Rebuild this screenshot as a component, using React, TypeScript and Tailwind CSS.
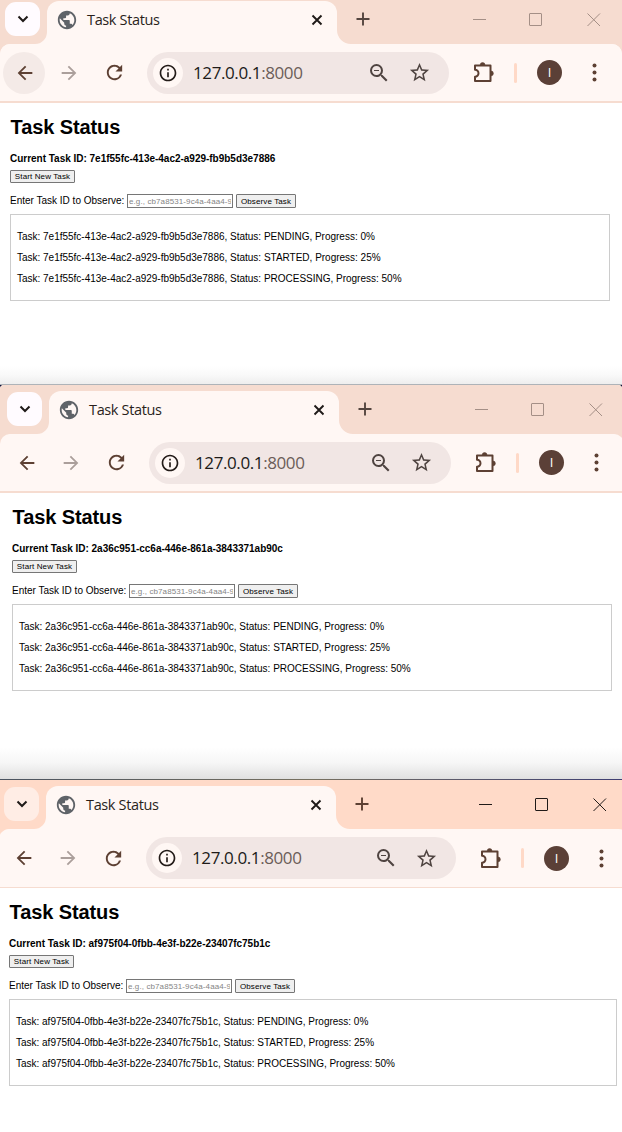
import React from "react";
import { MdArrowBack, MdArrowForward, MdInfoOutline, MdPublic, MdRefresh, MdStarOutline, MdZoomOut } from "react-icons/md";

type BrowserProps = {
  taskId: string;
  frame: string;
  inner: string;
  strip: string;
  stripColor: string;
  menuButton: string;
  controls: string;
  plus: string;
  toolbar: string;
  divider: string;
  backButton: string;
};

const STEPS = [
  { status: "PENDING", progress: 0 },
  { status: "STARTED", progress: 25 },
  { status: "PROCESSING", progress: 50 },
];

function TabStrip({ p }: { p: BrowserProps }) {
  return (
    <div className={`flex items-end ${p.strip} ${p.stripColor}`}>
      <div className={`mb-2 ml-[5px] flex h-[34px] w-[35px] items-center justify-center rounded-[11px] ${p.menuButton}`}>
        <svg width="12" height="8" viewBox="0 0 12 8" fill="none" stroke="#1f1a18" strokeWidth="2">
          <path d="M1.500 1.500 6 6l4.500-4.500" />
        </svg>
      </div>
      <div className="relative ml-[7px] flex h-[43px] w-[290px] items-center rounded-t-[12px] bg-[#fff7f4] pb-[6px] pl-[9px] pr-[14px]">
        <svg className="absolute bottom-0 -left-3" width="12" height="12" viewBox="0 0 12 12">
          <path d="M12 0A12 12 0 0 1 0 12H12Z" fill="#fff7f4" />
        </svg>
        <svg className="absolute bottom-0 -right-[14px]" width="14" height="14" viewBox="0 0 14 14">
          <path d="M0 0A14 14 0 0 0 14 14H0Z" fill="#fff7f4" />
        </svg>
        <MdPublic className="size-[22px] text-[#5f6368]" />
        <span className="ml-[9px] whitespace-nowrap font-['Open_Sans',sans-serif] text-[14.500px] leading-5 tracking-[-0.360px] text-[#2a1f1b]">Task Status</span>
        <svg className="ml-auto" width="12" height="12" viewBox="0 0 12 12" stroke="#1f1a18" strokeWidth="1.900">
          <path d="M1.500 1.500l9 9M10.500 1.500l-9 9" />
        </svg>
      </div>
      <svg className={`mb-[18px] ml-[19px] ${p.plus}`} width="14" height="14" viewBox="0 0 14 14" stroke="currentColor" strokeWidth="1.900">
        <path d="M7 .5v13M.5 7h13" />
      </svg>
      <svg className={`mb-[17px] ml-auto ${p.controls}`} width="128" height="15" viewBox="0 0 128 15" fill="none" stroke="currentColor">
        <path d="M0 7.500h13" />
        <rect x="56.500" y="1.500" width="12" height="12" rx=".5" />
        <path d="M114.500 1.500l12.500 12.500M127 1.500l-12.500 12.500" />
      </svg>
    </div>
  );
}

function Toolbar({ p }: { p: BrowserProps }) {
  return (
    <div className={`flex items-center bg-[#fff7f4] pl-[3px] ${p.toolbar}`}>
      <div className={`flex size-[42px] items-center justify-center rounded-full ${p.backButton}`}>
        <MdArrowBack className="ml-px size-[22px] text-[#5d4033]" />
      </div>
      <MdArrowForward className="ml-[13px] size-[22px] text-[#ab9f9b]" />
      <MdRefresh className="ml-[23px] size-[23px] text-[#5d4033]" />
      <div className="ml-[21px] flex h-[42px] flex-1 items-center rounded-full bg-[#f1e6e4] pl-[6px] pr-[18px]">
        <div className="flex size-[30px] items-center justify-center rounded-full bg-[#fff7f4]">
          <MdInfoOutline className="size-[20px] text-[#231b18]" />
        </div>
        <span className="ml-[10px] whitespace-nowrap font-['Open_Sans',sans-serif] text-[17px] leading-6 tracking-[-0.400px] text-[#201a18]">
          127.0.0.1<span className="text-[#6b5d58]">:8000</span>
        </span>
        <MdZoomOut className="ml-auto size-[24px] text-[#4f4441]" />
        <MdStarOutline className="ml-[17px] size-[23px] text-[#4f4441]" />
      </div>
      <svg className="ml-[23px]" width="23" height="23" viewBox="0 0 23 23" fill="none" stroke="#5d4033" strokeWidth="2">
        <path d="M3 4.500h15.500v15.500h-15.500v-4.300a3.500 3.500 0 0 0 0-7Z" strokeLinejoin="round" />
        <path d="M8.200 4a2.400 2.400 0 0 1 4.800 0ZM19 10a2.400 2.400 0 0 1 0 4.800Z" fill="#5d4033" strokeWidth=".6" />
      </svg>
      <div className="ml-[19px] h-5 w-[3px] rounded-full bg-[#ffd9c7]" />
      <div className="ml-5 flex size-[25px] items-center justify-center rounded-full bg-[#5b4037] font-['Open_Sans',sans-serif] text-[13px] leading-none text-white">I</div>
      <svg className="ml-[30px] mr-[25px]" width="5" height="19" viewBox="0 0 5 19" fill="#5d4033">
        <circle cx="2.500" cy="2.500" r="2" />
        <circle cx="2.500" cy="9.500" r="2" />
        <circle cx="2.500" cy="16.500" r="2" />
      </svg>
    </div>
  );
}

function TaskPage({ p }: { p: BrowserProps }) {
  const button = "whitespace-nowrap rounded-[1px] border border-[#767676] bg-[#efefef] text-center text-[8px] leading-[11px] tracking-[0.120px] text-black";
  return (
    <main className="pl-[10px] pr-[12px] font-['Liberation_Sans',sans-serif] text-[10px] leading-[12px] text-black">
      <h1 className="pl-[0.500px] pt-3 text-[20px] font-bold leading-6 tracking-[-0.100px]">Task Status</h1>
      <p className="mt-[14px] whitespace-nowrap font-bold tracking-[-0.015px]">Current Task ID: {p.taskId}</p>
      <button className={`mt-[5px] block h-[13px] w-[65px] ${button}`}>Start New Task</button>
      <div className="mt-[11px] flex h-[14px] items-center whitespace-nowrap">
        <label className="w-[117px]">Enter Task ID to Observe:</label>
        <input className="h-[14px] w-[106px] border border-[#767676] bg-white px-[1px] text-[8px] leading-[12px] tracking-[0.100px] placeholder:text-[#858585]" placeholder="e.g., cb7a8531-9c4a-4aa4-9b2e" />
        <button className={`ml-[3px] h-[14px] w-[60px] ${button}`}>Observe Task</button>
      </div>
      <div className="mt-[6px] flex h-[87px] flex-col gap-[9px] whitespace-nowrap border border-[#ccc] pl-[6px] pt-4 tracking-[-0.010px]">
        {STEPS.map((s) => (
          <p key={s.status}>Task: {p.taskId}, Status: {s.status}, Progress: {s.progress}%</p>
        ))}
      </div>
    </main>
  );
}

function Browser(p: BrowserProps) {
  return (
    <section className={`overflow-hidden bg-white ${p.frame}`}>
      <div className={p.stripColor}>
        <div className={p.inner}>
          <TabStrip p={p} />
        </div>
        <div className="rounded-t-[10px] bg-[#fff7f4]">
          <div className={p.inner}>
            <Toolbar p={{ ...p }} />
          </div>
        </div>
      </div>
      <div className={`bg-[#f6dcd0] ${p.divider}`} />
      <div className={p.inner}>
        <TaskPage p={p} />
      </div>
    </section>
  );
}

const inactive = {
  stripColor: "bg-[#f6dcd0]",
  menuButton: "bg-[#fffbff]",
  controls: "mr-[21px] text-[#a48f86]",
  plus: "text-[#54453f]",
  toolbar: "h-[57px] rounded-t-[10px]",
  divider: "h-[2px]",
};

export default function App() {
  return (
    <div className="h-[1132px] w-[622px] overflow-hidden bg-[#10103a]">
      <div className="relative">
        <Browser
          {...inactive}
          taskId="7e1f55fc-413e-4ac2-a929-fb9b5d3e7886"
          frame="h-[384px]"
          inner="w-[622px]"
          strip="h-[44px]"
          backButton="bg-[#f4eae7]"
        />
        <div className="absolute bottom-0 h-[18px] w-full bg-linear-to-b from-white via-[#f9f9f9] to-[#eeeeee]" />
      </div>
      <div className="h-px bg-[#aeb3b8]" />
      <div className="relative">
        <Browser
          {...inactive}
          taskId="2a36c951-cc6a-446e-861a-3843371ab90c"
          frame="h-[394px] rounded-t-[4px]"
          inner="ml-[2px] w-[622px]"
          strip="h-[49px]"
          backButton=""
        />
        <div className="absolute bottom-0 h-8 w-full bg-linear-to-b from-white via-[#f6f6f6] to-[#e0e0e0]" />
      </div>
      <div className="h-px bg-linear-to-r from-[#4a5360] via-[#77705f] to-[#3f3e72]" />
      <Browser
        taskId="af975f04-0fbb-4e3f-b22e-23407fc75b1c"
        frame="h-[352px]"
        inner="-ml-px w-[630px]"
        strip="h-[49px]"
        stripColor="bg-[#ffdac8]"
        menuButton="bg-[#ffede5]"
        controls="mr-[22px] text-[#201a18]"
        plus="text-[#5d4033]"
        toolbar="h-[58px] rounded-t-[10px]"
        divider="h-px"
        backButton=""
      />
    </div>
  );
}
